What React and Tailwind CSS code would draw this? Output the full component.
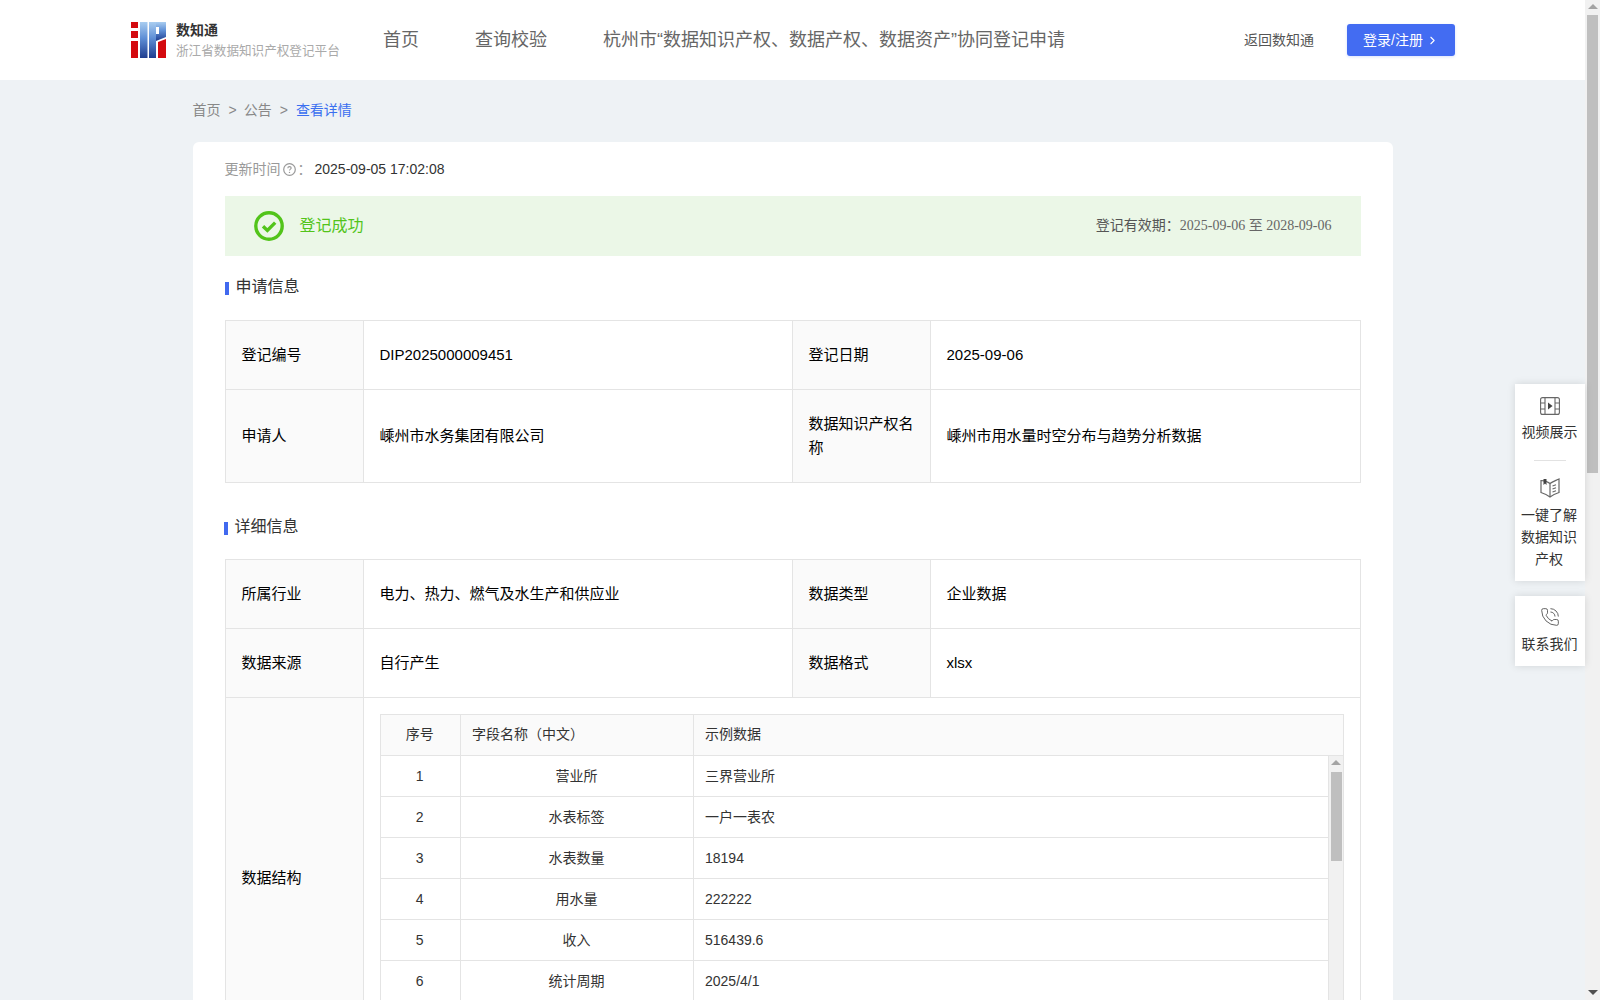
import React from "react";
import { ChevronRight, PhoneCall } from "lucide-react";

const rows = [
  ["1", "营业所", "三界营业所"],
  ["2", "水表标签", "一户一表农"],
  ["3", "水表数量", "18194"],
  ["4", "用水量", "222222"],
  ["5", "收入", "516439.6"],
  ["6", "统计周期", "2025/4/1"],
];

function Logo() {
  return (
    <svg width="35" height="36" viewBox="0 0 35 36" className="shrink-0">
      <defs>
        <linearGradient id="lg" x1="0" y1="0" x2="0" y2="1">
          <stop offset="0" stopColor="#a9cdf0" />
          <stop offset="0.45" stopColor="#5f8fd6" />
          <stop offset="1" stopColor="#1f3d8f" />
        </linearGradient>
      </defs>
      <rect x="0" y="0" width="7" height="36" fill="#d40a0f" />
      <rect x="0" y="6" width="7" height="3" fill="#fff" />
      <rect x="0" y="16" width="7" height="3" fill="#fff" />
      <rect x="9" y="0" width="7.5" height="36" fill="url(#lg)" />
      <rect x="18" y="0" width="7" height="36" fill="url(#lg)" />
      <path d="M25 0H35V15L25 19V12H28V5H25Z" fill="url(#lg)" />
      <path d="M27 20L35 17V36H27Z" fill="#d40a0f" />
    </svg>
  );
}

function CheckIcon() {
  return (
    <svg width="30" height="30" viewBox="0 0 30 30" fill="none" className="shrink-0">
      <circle cx="15" cy="15" r="13.2" stroke="#52c41a" strokeWidth="3.4" />
      <path d="M9 15.2L13.4 19.4L21.2 11.6" stroke="#52c41a" strokeWidth="3.4" />
    </svg>
  );
}

function QuestionIcon() {
  return (
    <svg width="13" height="13" viewBox="0 0 13 13" fill="none" className="shrink-0">
      <circle cx="6.5" cy="6.5" r="5.8" stroke="#999" strokeWidth="1.2" />
      <path d="M4.8 5.2C4.8 4.2 5.6 3.6 6.5 3.6C7.5 3.6 8.2 4.2 8.2 5C8.2 6.1 6.5 6.2 6.5 7.6" stroke="#999" strokeWidth="1.1" />
      <circle cx="6.5" cy="9.4" r="0.7" fill="#999" />
    </svg>
  );
}

function VideoIcon() {
  return (
    <svg width="20" height="18" viewBox="0 0 20 18" fill="none" stroke="#666" strokeWidth="1.1">
      <rect x="0.6" y="0.6" width="18.8" height="16.8" rx="2" />
      <path d="M5 0.6V17.4M15 0.6V17.4M0.6 6H5M0.6 12H5M15 6H19.4M15 12H19.4" />
      <path d="M8 5.6L12.6 9L8 12.4Z" fill="#444" stroke="none" />
    </svg>
  );
}

function BookIcon() {
  return (
    <svg width="20" height="20" viewBox="0 0 20 20" fill="none" stroke="#666" strokeWidth="1.2">
      <path d="M1 2.5C4 2.5 7.5 3.5 10 5.5C12.5 3.5 16 2.5 19 1V14.5C16 15.5 12.5 17 10 19C7.5 17 4 15.5 1 14.5Z" />
      <path d="M10 5.5V19" />
      <path d="M3.5 1H6.5V7L5 5.6L3.5 7Z" fill="#444" stroke="none" />
      <path d="M12.5 8L16 6.8M12.5 11L16 9.8M12.5 14L16 12.8" />
    </svg>
  );
}

function LabelCell({ children }) {
  return (
    <td className="border border-[#e4e4e4] bg-[#fafafa] px-4 py-[22px] leading-6 text-left text-black align-middle">
      {children}
    </td>
  );
}

function ValueCell({ children }) {
  return (
    <td className="border border-[#e4e4e4] bg-white px-4 py-[22px] leading-6 text-black align-middle">
      {children}
    </td>
  );
}

function SectionTitle({ children, className = "" }) {
  return (
    <div className={"flex items-center gap-[7px] h-6 text-base text-[#333] " + className}>
      <span className="w-1 h-[13px] mt-[2px] bg-[#4169ef]" />
      <span>{children}</span>
    </div>
  );
}

function InfoTable({ children }) {
  return (
    <table className="w-full table-fixed border-collapse text-[15px]">
      <colgroup>
        <col className="w-[138px]" />
        <col className="w-[429px]" />
        <col className="w-[138px]" />
        <col />
      </colgroup>
      <tbody>{children}</tbody>
    </table>
  );
}

function Scrollbar({ className = "", thumb, arrowDown = false }) {
  return (
    <div className={"relative shrink-0 bg-[#f1f1f1] " + className}>
      <span className="absolute left-1/2 -translate-x-1/2 top-[4px] w-0 h-0 border-x-[5px] border-x-transparent border-b-[5px] border-b-[#a3a3a3]" />
      <div className={thumb} />
      {arrowDown && (
        <span className="absolute left-1/2 -translate-x-1/2 bottom-[5px] w-0 h-0 border-x-[5px] border-x-transparent border-t-[5px] border-t-[#505050]" />
      )}
    </div>
  );
}

export default function App() {
  return (
    <div className="relative flex h-[1000px] w-[1600px] overflow-hidden bg-[#eef2f5] text-sm font-['Liberation_Sans','Noto_Sans_CJK_SC',sans-serif]">
      <div className="flex-1 min-w-0">
        <header className="h-20 bg-white flex items-center pl-[131px] pr-[130px]">
          <Logo />
          <div className="ml-[10px] w-[207px] shrink-0 pt-px">
            <div className="text-sm font-bold leading-5 text-[#333]">数知通</div>
            <div className="mt-px text-[12.6px] leading-5 text-[#aaa]">浙江省数据知识产权登记平台</div>
          </div>
          <nav className="flex items-center gap-14 text-lg text-[#666] -mt-[1px]">
            <span>首页</span>
            <span>查询校验</span>
            <span>杭州市“数据知识产权、数据产权、数据资产”协同登记申请</span>
          </nav>
          <span className="ml-auto text-sm text-[#555] mr-px -mt-px">返回数知通</span>
          <button className="ml-8 flex items-center justify-center gap-[3px] w-[108px] h-8 rounded-[3px] bg-[#436cf2] text-sm text-white shadow-[0_1px_3px_rgba(67,108,242,0.2)]">
            <span className="-mt-px">登录/注册</span>
            <ChevronRight size={13} strokeWidth={2} />
          </button>
        </header>

        <main className="w-[1200px] mx-auto">
          <div className="flex items-center h-[62px] pb-[2px] text-sm text-[#888]">
            <span>首页</span>
            <span className="ml-2 mr-[7px]">&gt;</span>
            <span>公告</span>
            <span className="mx-2">&gt;</span>
            <span className="text-[#3a6ff0]">查看详情</span>
          </div>

          <section className="bg-white rounded-t-[6px] px-8 pt-4 pb-8">
            <div className="flex items-center h-[22px] text-sm text-[#999]">
              <span className="-mt-px">更新时间</span>
              <span className="ml-[2px]"><QuestionIcon /></span>
              <span className="w-[19px] pl-[2px]">：</span>
              <span className="text-[#333]">2025-09-05 17:02:08</span>
            </div>

            <div className="mt-[16px] h-[60px] flex items-center bg-[#ebf7e7] pl-[29px] pr-[29px]">
              <CheckIcon />
              <span className="ml-[16px] -mt-px text-base text-[#52c41a]">登记成功</span>
              <span className="ml-auto -mt-[2px] text-sm text-[#555]">
                登记有效期：<span className="font-['Liberation_Serif','Noto_Sans_CJK_SC',serif] text-[#666]">2025-09-06 至 2028-09-06</span>
              </span>
            </div>

            <SectionTitle className="mt-[19px]">申请信息</SectionTitle>
            <div className="mt-[21px]">
              <InfoTable>
                <tr>
                  <LabelCell>登记编号</LabelCell>
                  <ValueCell>DIP2025000009451</ValueCell>
                  <LabelCell>登记日期</LabelCell>
                  <ValueCell>2025-09-06</ValueCell>
                </tr>
                <tr>
                  <LabelCell>申请人</LabelCell>
                  <ValueCell>嵊州市水务集团有限公司</ValueCell>
                  <LabelCell>数据知识产权名称</LabelCell>
                  <ValueCell>嵊州市用水量时空分布与趋势分析数据</ValueCell>
                </tr>
              </InfoTable>
            </div>

            <SectionTitle className="mt-[32px] -ml-px">详细信息</SectionTitle>
            <div className="mt-[20px]">
              <InfoTable>
                <tr>
                  <LabelCell>所属行业</LabelCell>
                  <ValueCell>电力、热力、燃气及水生产和供应业</ValueCell>
                  <LabelCell>数据类型</LabelCell>
                  <ValueCell>企业数据</ValueCell>
                </tr>
                <tr>
                  <LabelCell>数据来源</LabelCell>
                  <ValueCell>自行产生</ValueCell>
                  <LabelCell>数据格式</LabelCell>
                  <ValueCell>xlsx</ValueCell>
                </tr>
                <tr>
                  <LabelCell>数据结构</LabelCell>
                  <td colSpan={3} className="border border-[#e4e4e4] bg-white p-4">
                    <div className="border-t border-l border-r border-[#e4e4e4]">
                      <table className="w-full table-fixed border-collapse text-sm text-[#333]">
                        <colgroup>
                          <col className="w-[80px]" />
                          <col className="w-[233px]" />
                          <col />
                        </colgroup>
                        <thead>
                          <tr className="h-10 bg-[#fafafa]">
                            <th className="border-b border-r border-[#e4e4e4] font-normal text-center pb-px pr-px">序号</th>
                            <th className="border-b border-r border-[#e4e4e4] font-normal text-left pl-[11px] pr-3 pb-px">字段名称（中文）</th>
                            <th className="border-b border-[#e4e4e4] font-normal text-left pl-[11px] pr-3 pb-px">示例数据</th>
                          </tr>
                        </thead>
                      </table>
                      <div className="flex h-[287px] overflow-hidden">
                        <table className="flex-1 min-w-0 table-fixed border-collapse self-start text-sm text-[#333]">
                          <colgroup>
                            <col className="w-[80px]" />
                            <col className="w-[233px]" />
                            <col />
                          </colgroup>
                          <tbody>
                            {rows.map((r) => (
                              <tr key={r[0]} className="h-[41px]">
                                <td className="border-b border-r border-[#e4e4e4] text-center pr-px">{r[0]}</td>
                                <td className="border-b border-r border-[#e4e4e4] text-center pr-px">{r[1]}</td>
                                <td className="border-b border-[#e4e4e4] text-left pl-[11px] pr-3">{r[2]}</td>
                              </tr>
                            ))}
                          </tbody>
                        </table>
                        <Scrollbar
                          className="w-[16px] -mr-px border-l border-[#e4e4e4]"
                          thumb="absolute left-[2px] w-[11px] top-[16px] h-[89px] bg-[#bfbfbf]"
                        />
                      </div>
                    </div>
                  </td>
                </tr>
              </InfoTable>
            </div>
          </section>
        </main>
      </div>

      <Scrollbar
        className="w-[15px] h-full"
        arrowDown
        thumb="absolute left-[2px] right-[2px] top-[15px] h-[458px] bg-[#bfbfbf]"
      />

      <aside className="absolute right-[15px] top-[384px] w-[70px] flex flex-col gap-[15px] text-sm text-[#333] text-center">
        <div className="bg-white shadow-[0_0_8px_rgba(0,0,0,0.12)] h-[197px] pt-[13px]">
          <div className="flex justify-center"><VideoIcon /></div>
          <div className="leading-[22px] mt-[6px] pr-px">视频展示</div>
          <div className="mx-auto mt-[17px] w-8 h-px bg-[#e2e2e2]" />
          <div className="flex justify-center mt-[17px]"><BookIcon /></div>
          <div className="leading-[22px] mt-[6px] pl-[5px] pr-[7px]">一键了解数据知识产权</div>
        </div>
        <div className="bg-white shadow-[0_0_8px_rgba(0,0,0,0.12)] h-[70px] pt-[11px]">
          <div className="flex justify-center text-[#555]"><PhoneCall size={20} strokeWidth={1.1} /></div>
          <div className="leading-[22px] mt-[6px] pr-px">联系我们</div>
        </div>
      </aside>
    </div>
  );
}
